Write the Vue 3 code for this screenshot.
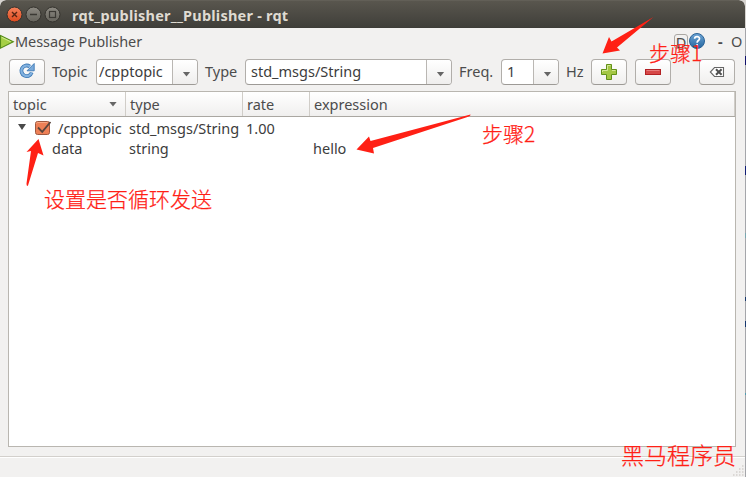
<script setup>
const headers = [
  { name: 'topic', sorted: true },
  { name: 'type' },
  { name: 'rate' },
  { name: 'expression' },
]
</script>

<template>
  <div class="screen">
    <div class="window">
      <header class="titlebar">
        <svg class="controls" width="56" height="20" viewBox="0 0 56 20">
          <defs>
            <linearGradient id="closeFill" x1="0" y1="0" x2="0" y2="1">
              <stop offset="0" stop-color="#f5825c" />
              <stop offset="1" stop-color="#dd4a1d" />
            </linearGradient>
            <linearGradient id="grayFill" x1="0" y1="0" x2="0" y2="1">
              <stop offset="0" stop-color="#8d8a82" />
              <stop offset="1" stop-color="#65635c" />
            </linearGradient>
          </defs>
          <circle cx="9.5" cy="10.5" r="7.5" fill="url(#closeFill)" stroke="#34322d" />
          <path d="M7 8l5 5M12 8l-5 5" stroke="#542413" stroke-width="1.4" />
          <circle cx="28.5" cy="10.5" r="7.5" fill="url(#grayFill)" stroke="#34322d" />
          <path d="M25 10.5h7" stroke="#3b3934" stroke-width="1.3" />
          <circle cx="47.5" cy="10.5" r="7.5" fill="url(#grayFill)" stroke="#34322d" />
          <rect x="44.5" y="7.5" width="6" height="6" fill="none" stroke="#3b3934" stroke-width="1.2" />
        </svg>
        <h1>rqt_publisher__Publisher - rqt</h1>
      </header>

      <div class="docktitle">
        <svg width="15" height="16" viewBox="0 0 15 16">
          <path d="M.5 1.5L13.3 7.8.5 14.2z" fill="#a5cf45" stroke="#548b18" stroke-width="1.1" />
          <path d="M1.6 3.3L10.8 7.8" stroke="#d3eb91" fill="none" />
        </svg>
        <span class="name">Message Publisher</span>
        <span class="dbutton">D</span>
        <svg class="help" width="18" height="18" viewBox="0 0 18 18">
          <defs>
            <linearGradient id="helpFill" x1="0" y1="0" x2="0" y2="1">
              <stop offset="0" stop-color="#6fa6d6" />
              <stop offset="1" stop-color="#23659f" />
            </linearGradient>
          </defs>
          <circle cx="9" cy="9" r="7.5" fill="url(#helpFill)" stroke="#2b6396" />
          <path d="M6.6 6.8C6.7 3.9 11.5 3.8 11.5 6.7c0 1.9-2.4 1.8-2.4 4" fill="none" stroke="#fff" stroke-width="1.7" />
          <circle cx="9.1" cy="13" r="1" fill="#fff" />
        </svg>
        <span class="dash">-</span>
        <span class="ring">O</span>
      </div>

      <div class="toolbar">
        <button class="btn">
          <svg class="refresh" width="18" height="18" viewBox="0 0 18 18">
            <path d="M13.7 10.5A5.3 5.3 0 1 1 11.8 4.5" fill="none" stroke="#3c78b4" stroke-width="3.8" />
            <path d="M16.2 1.5v7.3H9z" fill="#79aadb" stroke="#3c78b4" stroke-width=".9" />
            <path d="M13.7 10.5A5.3 5.3 0 1 1 12 4.7" fill="none" stroke="#82b2e0" stroke-width="2.2" />
          </svg>
        </button>
        <label class="l-topic">Topic</label>
        <div class="combo c-topic"><span class="value">/cpptopic</span><span class="drop"><i class="tri"></i></span></div>
        <label class="l-type">Type</label>
        <div class="combo c-type"><span class="value">std_msgs/String</span><span class="drop"><i class="tri"></i></span></div>
        <label class="l-freq">Freq.</label>
        <div class="combo c-freq"><span class="value">1</span><span class="drop"><i class="tri"></i></span></div>
        <label class="l-hz">Hz</label>
        <button class="btn">
          <svg width="18" height="18" viewBox="0 0 18 18">
            <path d="M6.5 1.5h5v5h5v5h-5v5h-5v-5h-5v-5h5z" fill="#a4c744" stroke="#629119" />
            <path d="M7.5 7.5v-5h3M2.5 9V7.5h5M12 7.5h3.5" fill="none" stroke="#d3e795" />
          </svg>
        </button>
        <button class="btn minus">
          <svg width="18" height="18" viewBox="0 0 18 18">
            <rect x="1.5" y="6.5" width="15" height="5" fill="#d64848" stroke="#b32124" />
            <path d="M2.5 7.5h13" stroke="#e87e7e" />
          </svg>
        </button>
        <button class="btn clear">
          <svg width="16" height="12" viewBox="0 0 16 12">
            <path d="M5.5 1.5h9v9h-9L1.3 6z" fill="#fff" stroke="#666" stroke-width="1.1" />
            <path d="M7 3.3l5.6 5.5M12.6 3.3L7 8.8" stroke="#505050" stroke-width="2" />
          </svg>
        </button>
      </div>

      <main class="tree">
        <div class="grid head">
          <div v-for="h in headers" :key="h.name" :class="['cell', 'h-' + h.name]">
            {{ h.name }}<i v-if="h.sorted" class="tri"></i>
          </div>
        </div>
        <div class="grid row">
          <div class="cell first">
            <i class="tri dark"></i>
            <svg width="18" height="18" viewBox="0 0 18 18">
              <rect x="1.5" y="2.5" width="14" height="13" rx="2" fill="#ee8056" stroke="#9f583f" />
              <path d="M2.5 4.5q0-1 1-1h10" fill="none" stroke="#f7a884" />
              <path d="M4 8.5l4.2 4.3L16.5 3" fill="none" stroke="#5a453c" stroke-width="1.8" />
            </svg>
            <span class="t-cpp">/cpptopic</span>
          </div>
          <div class="cell t-std">std_msgs/String</div>
          <div class="cell">1.00</div>
          <div class="cell"></div>
        </div>
        <div class="grid row">
          <div class="cell child">data</div>
          <div class="cell">string</div>
          <div class="cell"></div>
          <div class="cell hello">hello</div>
        </div>
      </main>

      <footer class="statusbar">
        <svg width="12" height="12" viewBox="0 0 12 12">
          <path d="M10 1h1.5M7 4h1.5M10 4h1.5M4 7h1.5M7 7h1.5M10 7h1.5M1 10h1.5M4 10h1.5M7 10h1.5M10 10h1.5" stroke="#d3d0cc" stroke-width="1.5" />
        </svg>
      </footer>
    </div>
    <div class="edge"></div>

    <svg class="arrows" width="746" height="477" viewBox="0 0 746 477">
      <g fill="#ff2015">
        <path d="M653.5 17L617 47.5 620 50.5 602.5 53.5 609 37 611.5 41.5Z" />
        <path d="M470.5 114.5Q471 116 466 117.5L373 148 374 153.5 356.5 149.5 369 136.5 370.5 141Z" />
        <path d="M38.5 139L43.5 155.5 38 153 28 185.5Q26.5 187 26.5 183.5L31 151 26.5 152Z" />
      </g>
    </svg>
    <span class="note step1">步骤1</span>
    <span class="note step2">步骤2</span>
    <span class="note loop">设置是否循环发送</span>
    <span class="note mark">黑马程序员</span>
  </div>
</template>

<style>
body {
  margin: 0;
  background: #f2f1f0;
}
</style>

<style scoped>
.screen {
  position: relative;
  display: flex;
  width: 746px;
  height: 477px;
  overflow: hidden;
  background: #d6d3cf;
  font: 14.5px/20px "Noto Sans", "Open Sans", sans-serif;
  color: #4c4c4c;
  white-space: nowrap;
}
.window {
  width: 745px;
  display: flex;
  flex-direction: column;
  background: #f2f1f0;
  border-radius: 6px 6px 0 0;
  overflow: hidden;
}
.edge {
  width: 1px;
  background: linear-gradient(#d6d3cf 28px, #a5a6aa 28px 56px, #10106c 56px 65px, #a5a6aa 65px 166px, #101d76 166px 175px, #a5a6aa 175px 233px, #79a7b0 233px 238px, #a5a6aa 238px 297px, #18386b 297px 301px, #a5a6aa 301px 321px, #15376e 321px 327px, #a5a6aa 327px 393px, #4e9bb0 393px 395px, #a5a6aa 395px);
}
.titlebar {
  height: 28px;
  display: flex;
  align-items: center;
  box-sizing: border-box;
  padding-left: 5px;
  background: linear-gradient(#6b6860 0, #59564e 1px, #403f3a 27px, #3b3a35);
  border-radius: 6px 6px 0 0;
}
h1 {
  margin: 0 0 0 11px;
  font: 700 14.5px/20px "Noto Sans", sans-serif;
  letter-spacing: 0.22px;
  color: #dfdbd2;
  padding-top: 1px;
}
.docktitle {
  height: 27px;
  display: flex;
  align-items: center;
}
.name {
  width: 659px;
  margin-top: -2px;
  letter-spacing: -0.08px;
}
.dbutton {
  width: 12px;
  height: 13px;
  line-height: 14px;
  text-align: center;
  border: 1px solid #aaa7a3;
  border-radius: 3px;
}
.help {
  margin-top: -1px;
}
.dash {
  margin: -2px 0 0 12px;
  font-weight: 700;
  width: 13px;
}
.ring {
  margin-top: -2px;
}
.toolbar {
  height: 26px;
  display: flex;
  padding: 4px 9px 6px;
}
label {
  box-sizing: border-box;
  padding-left: 7px;
  line-height: 25px;
}
.l-topic { width: 51px; }
.l-type { width: 47px; }
.l-freq { width: 49px; }
.l-hz { width: 32px; }
.btn,
.combo {
  box-sizing: border-box;
  height: 26px;
  border: 1px solid #b1aeaa;
  border-bottom-color: #9d9a96;
  border-radius: 4px;
}
.btn {
  width: 36px;
  padding: 0;
  display: flex;
  align-items: center;
  justify-content: center;
  background: linear-gradient(#fff, #f0efee);
}
.refresh {
  margin-top: -2px;
}
.minus { margin-left: 8px; }
.clear { margin-left: 28px; }
.combo {
  display: flex;
  background: #fff;
  color: #3c3c3c;
  overflow: hidden;
}
.c-topic { width: 102px; }
.c-type { width: 207px; }
.c-freq { width: 58px; }
.value {
  flex: 1;
  line-height: 23px;
  padding-left: 5px;
}
.c-topic .value {
  padding-left: 2px;
}
.drop {
  width: 24px;
  display: flex;
  align-items: center;
  justify-content: center;
  border-left: 1px solid #bab7b3;
  background: linear-gradient(#fff, #efeeed);
}
.tri {
  width: 8px;
  height: 5px;
  background: #666;
  clip-path: polygon(0 0, 100% 0, 50% 100%);
}
.drop .tri {
  margin: 4px 0 0 3px;
}
.tree {
  box-sizing: border-box;
  width: 728px;
  height: 356px;
  margin: 0 0 0 8px;
  border: 1px solid #b9b6b0;
  background: #fff;
  color: #3c3c3c;
}
.grid {
  display: grid;
  grid-template-columns: 117px 117px 67px 1fr;
}
.head {
  height: 25px;
  box-sizing: border-box;
  margin-bottom: 1px;
  border-bottom: 1px solid #aaa7a1;
  background: linear-gradient(#fff, #f0efee);
  color: #4c4c4c;
}
.head .cell {
  display: flex;
  align-items: center;
  padding-left: 4px;
  border-right: 1px solid #d0cdc8;
}
.head .tri {
  margin-left: auto;
  margin-right: 8px;
}
.row {
  height: 20px;
}
.row .cell {
  padding-left: 3px;
}
.first {
  display: flex;
}
.first .tri {
  margin: 6px 8px 0 6px;
  height: 6px;
}
.first svg {
  flex: none;
  width: 18px;
  margin: 1px 6px 0 0;
}
.tri.dark {
  background: #4a4a4a;
}
.row .child {
  padding-left: 43px;
}
.statusbar {
  margin-top: 9px;
  flex: 1;
  display: flex;
  justify-content: flex-end;
  align-items: flex-end;
  border-top: 1px solid #d3d0cc;
  box-shadow: inset 0 1px #fff;
  padding: 0 1px 0 0;
}
.arrows {
  position: absolute;
  left: 0;
  top: 0;
}
.note {
  position: absolute;
  font: 300 21px/28px "Noto Sans CJK SC", sans-serif;
  color: #ff2015;
  -webkit-text-stroke: 0.25px #ff2015;
}
.step1 { left: 649px; top: 38px; }
.step2 { left: 482px; top: 119px; }
.loop { left: 44px; top: 184px; }
.mark { left: 621px; top: 440px; font-size: 23px; }
</style>
